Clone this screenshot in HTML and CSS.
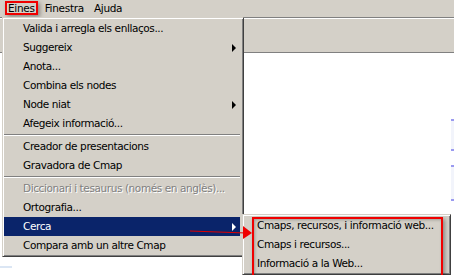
FILE: index.html
```html
<!DOCTYPE html>
<html lang="ca">
<head>
  <meta charset="UTF-8">
  <title>Eines</title>
  <link rel="stylesheet" href="styles.css">
</head>
<body>
  <div class="app">
    <div class="menubar">
      <span class="menubar-item marked">Eines</span>
      <span class="menubar-item">Finestra</span>
      <span class="menubar-item">Ajuda</span>
    </div>
    <div class="workspace">
      <div class="toolbar"></div>
      <div class="canvas">
        <!-- bits of the concept map peeking out behind the menus -->
        <div class="node node-right"></div>
        <div class="node node-right lower"></div>
        <div class="node-left"></div>
      </div>
    </div>

    <!-- Eines dropdown -->
    <div class="menu main-menu">
      <div class="item">Valida i arregla els enllaços...</div>
      <div class="item sub">Suggereix</div>
      <div class="item">Anota...</div>
      <div class="item">Combina els nodes</div>
      <div class="item sub">Node niat</div>
      <div class="item">Afegeix informació...</div>
      <div class="sep"></div>
      <div class="item">Creador de presentacions</div>
      <div class="item">Gravadora de Cmap</div>
      <div class="sep"></div>
      <div class="item disabled">Diccionari i tesaurus (només en anglès)...</div>
      <div class="item">Ortografia...</div>
      <div class="item sub active">Cerca</div>
      <div class="item">Compara amb un altre Cmap</div>
    </div>

    <!-- Cerca submenu -->
    <div class="menu submenu">
      <div class="item">Cmaps, recursos, i informació web...</div>
      <div class="item">Cmaps i recursos...</div>
      <div class="item">Informació a la Web...</div>
      <div class="marker"></div>
    </div>

    <svg class="pointer" width="70" height="20" viewBox="0 0 70 20">
      <line x1="0" y1="9" x2="56" y2="11" stroke="#e00000" stroke-width="1.2"/>
      <polygon points="53,4 62,11 53,17" fill="#f00000"/>
    </svg>
  </div>
</body>
</html>
```

FILE: styles.css
```css
body {
  margin: 0;
  font-family: "DejaVu Sans", "Liberation Sans", sans-serif;
  font-size: 10.5px;
  color: #000;
  background: #fff;
}

.app {
  position: relative;
  width: 454px;
  height: 275px;
  overflow: hidden;
  background: #fff;
}

.menubar {
  display: flex;
  height: 17px;
  padding-left: 3px;
  background: #d4d0c8;
  align-items: flex-start;
}

.menubar-item {
  padding: 0 5px;
  margin-top: 1px;
  line-height: 14px;
  letter-spacing: -0.3px;
}

.menubar-item.marked {
  padding: 0 1px;
  margin: 1px 2px 0;
  line-height: 10px;
  border: 2px solid #f00000;
  box-shadow: 2px 2px 4px rgba(0, 0, 0, 0.35);
}

.toolbar {
  height: 34px;
  background: #d4d0c8;
  border-top: 1px solid #808080;
  border-bottom: 1px solid #808080;
  box-shadow: inset 0 1px 0 #fff;
}

.canvas {
  position: relative;
  height: 222px;
  background: #fff;
}

.node {
  position: absolute;
  left: 451px;
  top: 66px;
  width: 8px;
  height: 28px;
  background: #f2f4fb;
  border-top: 2px solid #9a9af0;
  border-bottom: 2px solid #9a9af0;
}

.node.lower {
  top: 112px;
  height: 32px;
}

.node-left {
  position: absolute;
  left: 0;
  top: 213px;
  width: 12px;
  height: 2px;
  background: #dbe6f4;
}

.menu {
  position: absolute;
  background: #d4d0c8;
  border: 1px solid;
  border-color: #d4d0c8 #404040 #404040 #d4d0c8;
  box-shadow: inset 1px 1px 0 #fff, inset -1px -1px 0 #808080;
  padding: 1px 3px 1px 1px;
}

.main-menu {
  left: 2px;
  top: 17px;
  width: 236px;
}

.item {
  position: relative;
  height: 19px;
  line-height: 19px;
  padding-left: 19px;
  white-space: nowrap;
  letter-spacing: -0.4px;
}

.item.sub::after {
  content: "";
  position: absolute;
  right: 4px;
  top: 6px;
  border-left: 4px solid #000;
  border-top: 4px solid transparent;
  border-bottom: 4px solid transparent;
}

.item.active {
  background: #0a246a;
  color: #fff;
}

.item.active::after {
  border-left-color: #fff;
}

.item.disabled {
  color: #808080;
  text-shadow: 1px 1px 0 #fff;
}

.sep {
  height: 0;
  margin: 1px 0;
  border-top: 1px solid #808080;
  border-bottom: 1px solid #fff;
}

.submenu {
  left: 242px;
  top: 214px;
  width: 203px;
}

.submenu .item {
  padding-left: 13px;
}

.submenu .marker {
  position: absolute;
  left: 9px;
  top: 2px;
  width: 187px;
  height: 56px;
  border: 2px solid #f00000;
  box-shadow: 2px 2px 4px rgba(0, 0, 0, 0.35), inset 1px 1px 3px rgba(0, 0, 0, 0.25);
}

.pointer {
  position: absolute;
  left: 190px;
  top: 222px;
}
```
